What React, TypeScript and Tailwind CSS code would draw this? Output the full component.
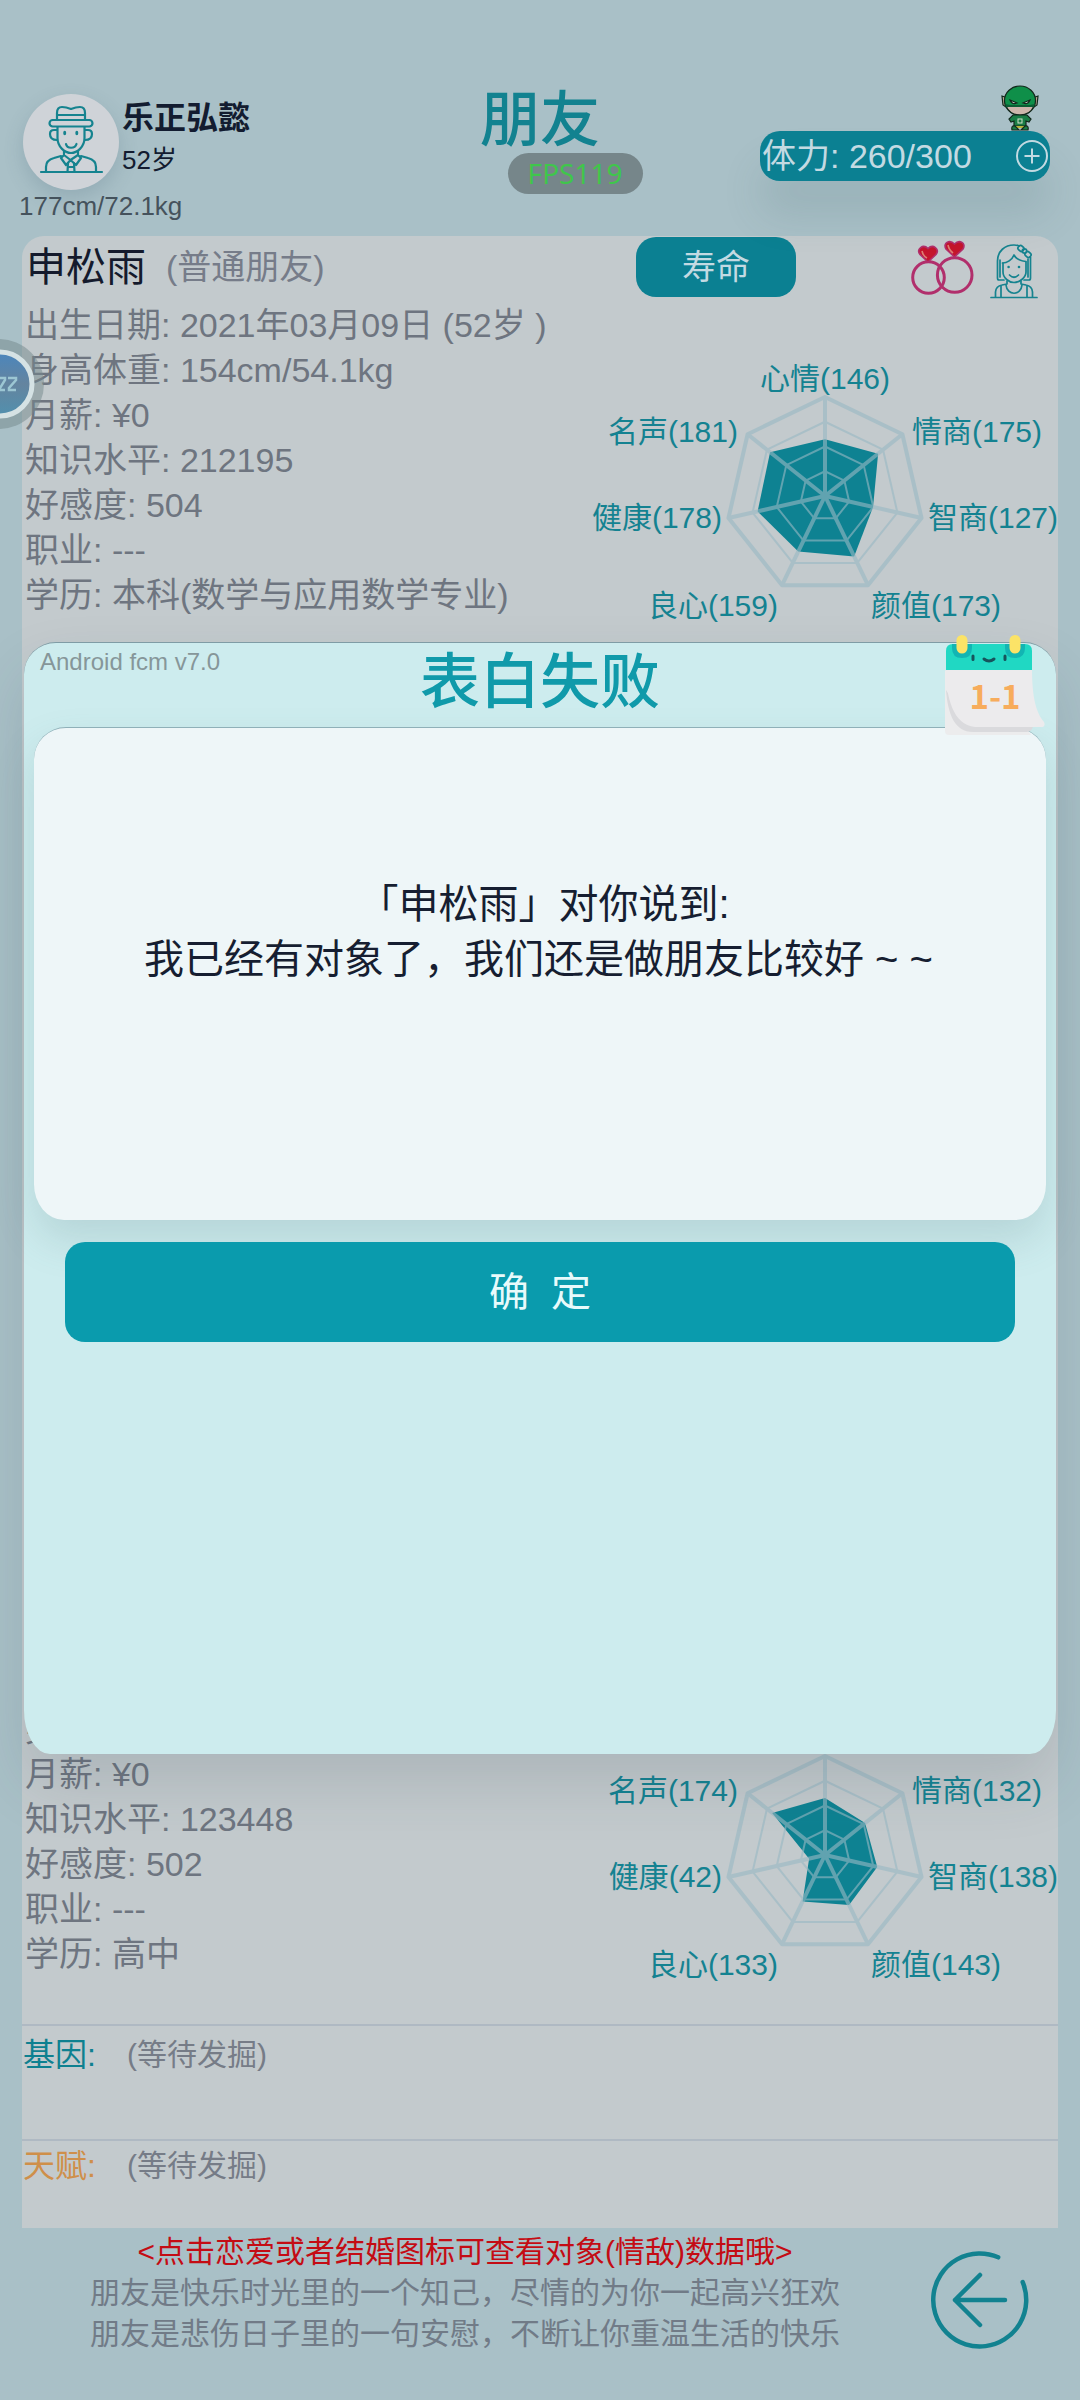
interface Stat {
  name: string
  value: number
}

interface Friend {
  id: string
  name?: string
  relation?: string
  info: string[]
  stats: Stat[]
  traits: { label: string; value: string; color: string }[]
}

const friends: Friend[] = [
  {
    id: "1",
    name: "申松雨",
    relation: "(普通朋友)",
    info: [
      "出生日期: 2021年03月09日 (52岁 )",
      "身高体重: 154cm/54.1kg",
      "月薪: ¥0",
      "知识水平: 212195",
      "好感度: 504",
      "职业: ---",
      "学历: 本科(数学与应用数学专业)",
    ],
    stats: [
      { name: "心情", value: 146 },
      { name: "情商", value: 175 },
      { name: "智商", value: 127 },
      { name: "颜值", value: 173 },
      { name: "良心", value: 159 },
      { name: "健康", value: 178 },
      { name: "名声", value: 181 },
    ],
    traits: [],
  },
  {
    id: "2",
    info: ["出生日期:", "身高体重:", "月薪: ¥0", "知识水平: 123448", "好感度: 502", "职业: ---", "学历: 高中"],
    stats: [
      { name: "心情", value: 147 },
      { name: "情商", value: 132 },
      { name: "智商", value: 138 },
      { name: "颜值", value: 143 },
      { name: "良心", value: 133 },
      { name: "健康", value: 42 },
      { name: "名声", value: 174 },
    ],
    traits: [
      { label: "基因:", value: "(等待发掘)", color: "text-[#0e8090]" },
      { label: "天赋:", value: "(等待发掘)", color: "text-[#cf8f4a]" },
    ],
  },
]

const CENTER_X = 235
const CENTER_Y = 136
const RADIUS = 99
const MAX_STAT = 255

const labelSpots = [
  { x: 235, y: 18, anchor: "middle" },
  { x: 322, y: 71, anchor: "start" },
  { x: 338, y: 157, anchor: "start" },
  { x: 281, y: 245, anchor: "start" },
  { x: 188, y: 245, anchor: "end" },
  { x: 132, y: 157, anchor: "end" },
  { x: 148, y: 71, anchor: "end" },
] as const

function vertex(index: number, radius: number) {
  const angle = (index * 2 * Math.PI) / 7
  return [CENTER_X + radius * Math.sin(angle), CENTER_Y - radius * Math.cos(angle)]
}

function heptagon(radii: number[]) {
  return radii.map((r, i) => vertex(i, r).join(",")).join(" ")
}

function RadarChart({ stats }: { stats: Stat[] }) {
  return (
    <svg viewBox="0 0 468 265" className="w-[468px] h-[265px] shrink-0">
      <polygon points={heptagon(stats.map((s) => (s.value / MAX_STAT) * RADIUS))} fill="#0e8292" />
      <g opacity="0.6" fill="none" stroke="#98b9c4" strokeLinejoin="round">
        {[0.25, 0.5, 0.75].map((level) => (
          <polygon key={level} points={heptagon(Array(7).fill(RADIUS * level))} strokeWidth="2" />
        ))}
        <polygon points={heptagon(Array(7).fill(RADIUS))} strokeWidth="4" />
        {stats.map((s, i) => {
          const [x, y] = vertex(i, RADIUS)
          return <line key={s.name} x1={CENTER_X} y1={CENTER_Y} x2={x} y2={y} strokeWidth="4" />
        })}
      </g>
      <g fill="#148291" fontSize="30">
        {stats.map((s, i) => (
          <text key={s.name} x={labelSpots[i].x} y={labelSpots[i].y + 11} textAnchor={labelSpots[i].anchor}>
            {s.name}({s.value})
          </text>
        ))}
      </g>
    </svg>
  )
}

function ManIcon() {
  return (
    <svg
      viewBox="0 0 96 96"
      className="size-24"
      fill="none"
      stroke="#15838f"
      strokeWidth="2.2"
      strokeLinecap="round"
      strokeLinejoin="round"
    >
      <path d="M34 25V19Q34 13 39 13Q43 13 48 15Q53 13 57 13Q62 13 62 19V25M34 21H62" />
      <rect x="26.500" y="26" width="43" height="6.500" rx="3.200" />
      <path d="M34.500 33V44C34.500 53 42 59 48 59C54 59 61.500 53 61.500 44V33" />
      <path d="M34 36H31C28 36 27 38 27 40C27 44 30 46 34 46M62 36H65C68 36 69 38 69 40C69 44 66 46 62 46" />
      <path d="M43 50C44 55 52 55 53.500 50" />
      <path d="M41 57V61L47.500 66L55 61V57M41 61L38 64L43 71L47.500 66L53 71L58 64L55 61" />
      <path d="M45 69L44.500 78M51 69L51.500 78M45 73H51M18 78H79M23 78V73C23 67 27 65 31 64L38 62M73 78V73C73 67 69 65 65 64L58 62" />
      <ellipse cx="41.700" cy="39" rx="1.500" ry="2.200" fill="#15838f" stroke="none" />
      <ellipse cx="53.800" cy="39" rx="1.500" ry="2.200" fill="#15838f" stroke="none" />
    </svg>
  )
}

function WomanIcon() {
  return (
    <svg
      viewBox="0 0 48 56"
      className="w-12 h-14"
      fill="none"
      stroke="#15838f"
      strokeWidth="1.700"
      strokeLinecap="round"
      strokeLinejoin="round"
    >
      <path d="M14 37H9Q7.500 37 7.500 35V18C7.500 8 15 2 24 2Q27 2 29 3M40.500 14V35Q40.500 37 39 37H34" />
      <path d="M13 20V29C13 35 19 39.500 24 39.500C29 39.500 36 35 36 29V19" />
      <path d="M12.500 20C17 20 22 17 24 12C26 16 31 18 36 18.500M10 17V34M38 16V34" />
      <rect x="28" y="3" width="6" height="5" rx="2" transform="rotate(45 31 5.500)" />
      <rect x="35" y="9" width="6" height="5" rx="2" transform="rotate(45 38 11.500)" />
      <circle cx="34.500" cy="8" r="2.200" />
      <path d="M19.500 32Q24 36.500 28.500 32M1 54.500H47M5.500 54V49Q6 43 12 42L17 41V38M42.500 54V49Q42 43 36 42L31 41V38" />
      <path d="M11 54V43M37 54V43M16 42C17 53 31 53 32 42" />
      <circle cx="18.600" cy="24" r="1.300" fill="#15838f" stroke="none" />
      <circle cx="29" cy="24" r="1.300" fill="#15838f" stroke="none" />
    </svg>
  )
}

function RingsIcon() {
  return (
    <svg viewBox="0 0 63 55" className="w-[63px] h-[55px]">
      <g fill="none" stroke="#b12f6c" strokeWidth="3">
        <circle cx="17.500" cy="37.500" r="15.800" />
        <circle cx="43.700" cy="35" r="17.300" />
      </g>
      <g fill="#c4152c" stroke="#b12f6c" strokeWidth="1.600">
        <path d="M17 22L9 14.500C5 9 12 3.500 17 8.500C22 3.500 29 9 25 14.500Z" />
        <path d="M43.500 17L35 9C31.500 3 38.500 -1 43.500 4C48.500 -1 55.500 3 52 9Z" />
      </g>
      <path d="M11 11Q12 16 16 18M37 5Q38 10 42 13" fill="none" stroke="#dd7f74" strokeWidth="1.600" />
    </svg>
  )
}

function HeroIcon() {
  return (
    <svg viewBox="0 0 38 46" className="w-[38px] h-[46px]" stroke="#12281c" strokeWidth="1.200">
      <path d="M4 12L1 11L2 20L5 22ZM34 12L37 11L36 20L33 22Z" fill="#b9a18f" />
      <ellipse cx="19" cy="15.500" rx="15.500" ry="14.500" fill="#0f8f49" />
      <path d="M5 21C8 28 14 30 19 30C24 30 30 28 33 21Z" fill="#cdb6ab" />
      <path d="M4 19Q19 23 34 19L33 22H5Z" fill="#0b5d34" stroke="none" />
      <path d="M9 15L16 18Q11 20 9 15ZM29 15L22 18Q27 20 29 15Z" fill="#d7dfd5" />
      <path d="M12 30H26L30 34L28 37L25 36V41H13V36L10 37L8 34Z" fill="#1a7d45" />
      <rect x="17" y="34" width="4" height="4" fill="none" stroke="#cfe0c8" strokeWidth="1" />
      <path d="M13 41H25L24 43H14Z" fill="#b6b63a" stroke="none" />
      <path d="M11 45Q10 40 14 41L18 45ZM27 45Q28 40 24 41L20 45Z" fill="#1a7d45" />
    </svg>
  )
}

function CalendarIcon() {
  return (
    <svg viewBox="0 0 100 100" className="size-[100px]">
      <path d="M0 35V96Q0 100 4 100H86L80 92Z" fill="#ececed" />
      <path d="M1 55C3 80 10 97 28 97H82Q88 96 88 90L20 85Z" fill="#dadadd" />
      <path d="M1 34H87C87 62 91 78 99 87Q101 92 96 92H30C8 90 1 62 1 34Z" fill="#ecebed" />
      <path d="M1 35V16Q1 9 8 9H80Q87 9 87 16V35Z" fill="#20d8c3" />
      <path d="M7 9H27V13Q27 23 17 23Q7 23 7 13ZM60 9H80V13Q80 23 70 23Q60 23 60 13Z" fill="#12b5b3" />
      <rect x="11.500" y="0" width="11" height="18.500" rx="5.500" fill="#fbe367" />
      <rect x="64.500" y="0" width="11" height="18.500" rx="5.500" fill="#fbe367" />
      <path d="M28 21V24.500M60 21V24.500M39 24Q44 28 49 24" fill="none" stroke="#17545c" strokeWidth="3" strokeLinecap="round" />
      <text
        x="50"
        y="74"
        textAnchor="middle"
        fontSize="33"
        fill="#f7ac5c"
        className="font-['Noto_Sans_CJK_SC',sans-serif] font-bold"
      >
        1-1
      </text>
    </svg>
  )
}

function BackIcon() {
  return (
    <svg
      viewBox="0 0 100 100"
      className="size-[100px]"
      fill="none"
      stroke="#128290"
      strokeWidth="4.500"
      strokeLinecap="round"
      strokeLinejoin="round"
    >
      <path d="M68.200 7.300A46.500 46.500 0 1 0 92.700 32.200M25 50H75M50 25L25 50L50 75" />
    </svg>
  )
}

// Round helper bubble docked half outside the left edge
function FloatingBubble() {
  return (
    <svg viewBox="0 0 44 90" className="absolute left-0 top-[339px] w-11 h-[90px]">
      <defs>
        <linearGradient id="bubble" x1="0" y1="0" x2="0" y2="1">
          <stop offset="0" stopColor="#4a86bd" />
          <stop offset="0.5" stopColor="#64849f" />
          <stop offset="1" stopColor="#5190ae" />
        </linearGradient>
      </defs>
      <circle cx="-1" cy="45" r="45" fill="#74888c" opacity="0.5" />
      <circle cx="0" cy="45" r="32" fill="url(#bubble)" stroke="#d5e2e4" strokeWidth="5" />
      <path d="M-2 39H5V41L0 49V51H5M8 39H16V41L9 49V51H16" fill="none" stroke="#9cc6d3" strokeWidth="2.500" />
    </svg>
  )
}

function Header() {
  return (
    <header className="grid grid-cols-[1fr_auto_1fr] h-[236px] shrink-0">
      <div className="pl-[23px] pt-[94px]">
        <div className="flex gap-[3px]">
          <div className="rounded-full bg-[#cfd3d8] shadow-[0_8px_20px_rgba(60,90,110,0.2)]">
            <ManIcon />
          </div>
          <div className="pt-[3px] leading-[42px] text-[#131c30]">
            <p className="text-[32px] font-bold">乐正弘懿</p>
            <p className="text-[26px]">52岁</p>
          </div>
        </div>
        <p className="-ml-1 text-[26px] leading-[32px] text-[#45525c]">177cm/72.1kg</p>
      </div>
      <h1 className="pt-[86px] text-[60px] leading-[70px] font-medium text-[#128290]">朋友</h1>
      <div className="flex justify-end items-start pt-[131px] pr-[30px]">
        <div className="relative">
          <button
            type="button"
            className="flex items-center justify-between w-[290px] h-[50px] px-[2px] rounded-[20px] bg-[#0b8092] text-[34px] leading-[50px] text-[#c3dae2] shadow-[0_34px_40px_rgba(60,90,100,0.14)]"
          >
            体力: 260/300
            <svg viewBox="0 0 32 32" className="size-8" fill="none" stroke="#c3dae2" strokeWidth="2">
              <circle cx="16" cy="16" r="15" />
              <path d="M16 8.500V23.500M8.500 16H23.500" />
            </svg>
          </button>
          <div className="absolute right-[11px] bottom-[50px]">
            <HeroIcon />
          </div>
        </div>
      </div>
    </header>
  )
}

function FriendCard({ friend }: { friend: Friend }) {
  return (
    <article>
      {friend.name && (
        <div className="flex items-center h-[66px] pl-1 pr-5 pb-1">
          <h2 className="text-[40px] leading-[60px] text-[#141a2c]">{friend.name}</h2>
          <span className="ml-5 text-[34px] leading-[60px] text-[#767c89]">{friend.relation}</span>
          <button
            type="button"
            className="ml-auto mr-[115px] w-40 h-[60px] rounded-[20px] bg-[#0b8092] text-[34px] text-[#c3dae2]"
          >
            寿命
          </button>
          <button type="button" aria-label="恋爱">
            <RingsIcon />
          </button>
          <button type="button" aria-label="头像" className="ml-4 pt-2">
            <WomanIcon />
          </button>
        </div>
      )}
      <div className="flex justify-between">
        <ul className="pl-[3px] pt-px text-[34px] leading-[45px] text-[#6e7580] whitespace-nowrap">
          {friend.info.map((line) => (
            <li key={line}>{line}</li>
          ))}
        </ul>
        <div className="pt-[58px]">
          <RadarChart stats={friend.stats} />
        </div>
      </div>
      {friend.traits.length > 0 && (
        <dl className="pt-10">
          {friend.traits.map((trait) => (
            <div
              key={trait.label}
              className="flex h-[115px] last:h-[89px] pt-1 last:pt-0 pl-px border-t-2 border-[#afb9c3] leading-[50px]"
            >
              <dt className={`w-[104px] text-[32px] ${trait.color}`}>{trait.label}</dt>
              <dd className="text-[30px] text-[#767c87]">{trait.value}</dd>
            </div>
          ))}
        </dl>
      )}
    </article>
  )
}

function Footer() {
  return (
    <footer className="flex items-start justify-between h-[172px] shrink-0 pl-[90px] pr-[50px]">
      <div className="pt-[3px] text-[30px] leading-[41px] text-center text-[#717b87]">
        <p className="text-[#c40c14]">&lt;点击恋爱或者结婚图标可查看对象(情敌)数据哦&gt;</p>
        <p>朋友是快乐时光里的一个知己，尽情的为你一起高兴狂欢</p>
        <p>朋友是悲伤日子里的一句安慰，不断让你重温生活的快乐</p>
      </div>
      <button type="button" aria-label="返回" className="mt-[22px]">
        <BackIcon />
      </button>
    </footer>
  )
}

function RejectDialog() {
  return (
    <div className="absolute inset-0 flex items-center px-6 pb-1">
      <div
        role="dialog"
        aria-labelledby="dialog-title"
        className="relative w-full h-[1112px] px-[10px] border-t border-[#7f9ca5] bg-[#cdecee] [border-radius:32px_32px_26px_26px/32px_32px_44px_44px] shadow-[0_30px_60px_rgba(50,70,80,0.15)]"
      >
        <p className="absolute left-4 top-0 text-2xl leading-[38px] text-[#869699]">Android fcm v7.0</p>
        <div className="absolute right-[11px] -top-2">
          <CalendarIcon />
        </div>
        <h2 id="dialog-title" className="h-[84px] text-center text-[60px] leading-[80px] font-medium text-[#109aaa]">
          表白失败
        </h2>
        <div className="h-[493px] pt-[149px] pl-2 border-t border-[#8fb0b8] bg-[#eef6f8] [border-radius:32px_32px_30px_30px/32px_32px_36px_36px] text-center text-[40px] leading-[55px] text-[#161e31] shadow-[0_20px_40px_rgba(80,110,115,0.18)]">
          <p>「申松雨」对你说到:</p>
          <p>我已经有对象了，我们还是做朋友比较好{"\u00a0~\u00a0~\u00a0"}</p>
        </div>
        <div className="relative px-[31px] pt-[22px]">
          <button type="button" className="w-full h-[100px] rounded-[20px] bg-[#0a9bad] text-[40px] text-[#e8fafb]">
            确{"\u00a0\u00a0"}定
          </button>
        </div>
      </div>
    </div>
  )
}

export default function App() {
  return (
    <div className="relative flex flex-col min-h-screen bg-[#a9c0c7] font-['Liberation_Sans','Noto_Sans_CJK_SC',sans-serif]">
      <Header />
      <main className="flex flex-col flex-1 justify-between mx-[22px] rounded-t-[22px] bg-[#c3cacd]">
        {friends.map((friend) => (
          <FriendCard key={friend.id} friend={friend} />
        ))}
      </main>
      <Footer />
      <RejectDialog />
      <div className="absolute left-[47%] top-[153px] px-5 rounded-full bg-[#76868a] font-['Noto_Sans',sans-serif] text-[28px] leading-[41px] text-[#3fc64b]">
        FPS119
      </div>
      <FloatingBubble />
    </div>
  )
}
